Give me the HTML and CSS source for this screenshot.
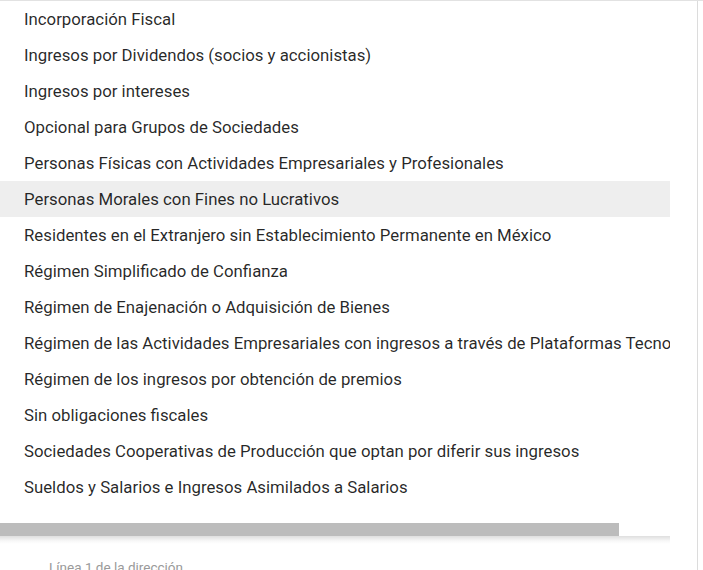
FILE: index.html
```html
<!DOCTYPE html>
<html lang="es">
<head>
<meta charset="utf-8">
<title>Régimen fiscal</title>
<link rel="stylesheet" href="styles.css">
</head>
<body>
<div class="page">
  <div class="frame">
    <div class="panel">
      <ul class="list">
        <li class="item">Incorporación Fiscal</li>
        <li class="item">Ingresos por Dividendos (socios y accionistas)</li>
        <li class="item">Ingresos por intereses</li>
        <li class="item">Opcional para Grupos de Sociedades</li>
        <li class="item">Personas Físicas con Actividades Empresariales y Profesionales</li>
        <li class="item item-active">Personas Morales con Fines no Lucrativos</li>
        <li class="item">Residentes en el Extranjero sin Establecimiento Permanente en México</li>
        <li class="item">Régimen Simplificado de Confianza</li>
        <li class="item">Régimen de Enajenación o Adquisición de Bienes</li>
        <li class="item">Régimen de las Actividades Empresariales con ingresos a través de Plataformas Tecnológicas</li>
        <li class="item">Régimen de los ingresos por obtención de premios</li>
        <li class="item">Sin obligaciones fiscales</li>
        <li class="item">Sociedades Cooperativas de Producción que optan por diferir sus ingresos</li>
        <li class="item">Sueldos y Salarios e Ingresos Asimilados a Salarios</li>
      </ul>
      <div class="scrollbar"><div class="thumb"></div></div>
    </div>
    <div class="shadow"></div>
    <div class="field-label">Línea 1 de la dirección</div>
  </div>
</div>
</body>
</html>
```
FILE: styles.css
```css
html, body {
  margin: 0;
  padding: 0;
  background: #ffffff;
}
.page {
  width: 703px;
  height: 570px;
  overflow: hidden;
  border-top: 1px solid #e2e2e2;
  box-sizing: border-box;
  font-family: Roboto, "Liberation Sans", sans-serif;
}
.frame {
  width: 697px;
  height: 569px;
  border-right: 1px solid #dcdcdc;
  overflow: hidden;
}
.panel {
  width: 670px;
  overflow: hidden;
  background: #ffffff;
  display: flex;
  flex-direction: column;
}
.list {
  list-style: none;
  margin: 0;
  padding: 0 0 18px 0;
}
.item {
  height: 36px;
  box-sizing: border-box;
  padding: 1px 24px 0 24px;
  line-height: 35px;
  font-size: 16.8px;
  color: rgba(0, 0, 0, 0.85);
  white-space: nowrap;
}
.item-active {
  background: #eeeeee;
}
.scrollbar {
  height: 13px;
}
.thumb {
  width: 619px;
  height: 13px;
  background: #bcbcbc;
}
.shadow {
  width: 670px;
  height: 8px;
  background: linear-gradient(to bottom, rgba(0,0,0,0.13), rgba(0,0,0,0.03) 60%, rgba(0,0,0,0));
}
.field-label {
  margin: 15px 0 0 49px;
  font-size: 13.5px;
  color: #9a9a9a;
  white-space: nowrap;
}
```
